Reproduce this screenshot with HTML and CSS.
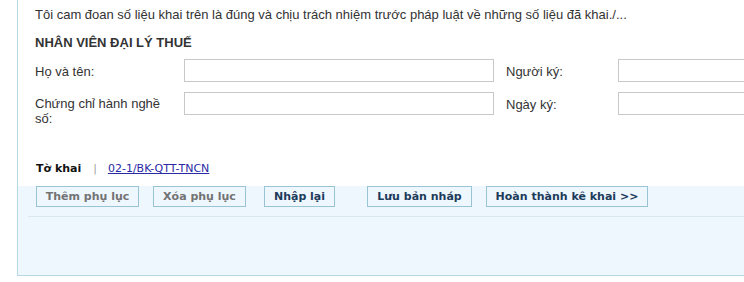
FILE: index.html
```html
<!DOCTYPE html>
<html lang="vi">
<head>
<meta charset="utf-8">
<title>Tờ khai</title>
<link rel="stylesheet" href="styles.css">
</head>
<body>
<div class="frame">
  <div class="top">
    <p class="declare">Tôi cam đoan số liệu khai trên là đúng và chịu trách nhiệm trước pháp luật về những số liệu đã khai./...</p>
    <h3 class="heading">NHÂN VIÊN ĐẠI LÝ THUẾ</h3>
    <div class="form">
      <label class="lbl">Họ và tên:</label>
      <input class="field" type="text">
      <label class="lbl lbl-right">Người ký:</label>
      <input class="field field-right" type="text">
      <label class="lbl lbl-narrow">Chứng chỉ hành nghề số:</label>
      <input class="field" type="text">
      <label class="lbl lbl-right">Ngày ký:</label>
      <input class="field field-right" type="text">
    </div>
    <div class="tabs">
      <span class="tab-current">Tờ khai</span>
      <span class="tab-sep">|</span>
      <a class="tab-link" href="#">02-1/BK-QTT-TNCN</a>
    </div>
  </div>
  <div class="bottom">
    <div class="actions">
      <button class="btn btn-off b1" type="button">Thêm phụ lục</button>
      <button class="btn btn-off b2" type="button">Xóa phụ lục</button>
      <button class="btn b3" type="button">Nhập lại</button>
      <button class="btn b4" type="button">Lưu bản nháp</button>
      <button class="btn b5" type="button">Hoàn thành kê khai &gt;&gt;</button>
    </div>
    <div class="rule"></div>
  </div>
</div>
</body>
</html>
```

FILE: styles.css
```css
html, body {
  margin: 0;
  padding: 0;
  background: #ffffff;
}

.frame {
  margin-left: 17px;
  border-left: 1px solid #b9d8e6;
  border-bottom: 1px solid #b9d8e6;
  overflow: hidden;
}

.top {
  background: #ffffff;
  padding: 7px 0 9px 17px;
}

.declare {
  margin: 0;
  font-family: "Liberation Sans", Arial, sans-serif;
  font-size: 13px;
  line-height: 15px;
  color: #333333;
  white-space: nowrap;
}

.heading {
  margin: 13px 0 0 0;
  font-family: "Liberation Sans", Arial, sans-serif;
  font-size: 13px;
  line-height: 15px;
  font-weight: bold;
  color: #333333;
}

.form {
  margin-top: 9px;
  display: grid;
  grid-template-columns: 149px 310px 124px 200px;
  row-gap: 10px;
  align-items: start;
}

.lbl {
  margin-top: 5px;
  font-family: "Liberation Sans", Arial, sans-serif;
  font-size: 13px;
  line-height: 15px;
  color: #333333;
}

.lbl-narrow {
  margin-top: 4px;
  width: 135px;
}

.lbl-right {
  margin-left: 12px;
}

.field {
  box-sizing: border-box;
  width: 310px;
  height: 23px;
  margin: 0;
  border: 1px solid #c8c8c8;
  background: #ffffff;
  padding: 0 4px;
}

.field-right {
  width: 200px;
}

.tabs {
  margin-top: 35px;
  padding-left: 1px;
  font-family: "DejaVu Sans", Tahoma, sans-serif;
  font-size: 11px;
  line-height: 16px;
  display: flex;
  align-items: baseline;
}

.tab-current {
  font-weight: bold;
  color: #111111;
}

.tab-sep {
  color: #a0a0a0;
  margin: 0 11px 0 12px;
}

.tab-link {
  color: #2a2aa5;
  text-decoration: underline;
}

.bottom {
  background: #eef7fd;
  height: 89px;
  box-sizing: border-box;
}

.actions {
  display: flex;
  align-items: flex-start;
  padding-left: 18px;
}

.btn {
  box-sizing: border-box;
  height: 21px;
  margin: 0;
  padding: 0;
  background: #eef7fd;
  border: 1px solid #99c4d5;
  font-family: "DejaVu Sans", Tahoma, sans-serif;
  font-size: 11px;
  font-weight: bold;
  color: #1d3b5a;
  text-align: center;
  line-height: 19px;
  white-space: nowrap;
}

.btn-off {
  color: #737373;
}

.b1 { width: 103px; }
.b2 { width: 93px;  margin-left: 14px; }
.b3 { width: 71px;  margin-left: 18px; }
.b4 { width: 105px; margin-left: 32px; }
.b5 { width: 162px; margin-left: 14px; }

.rule {
  margin: 9px 0 0 10px;
  height: 1px;
  background: #dae8f0;
}
```
